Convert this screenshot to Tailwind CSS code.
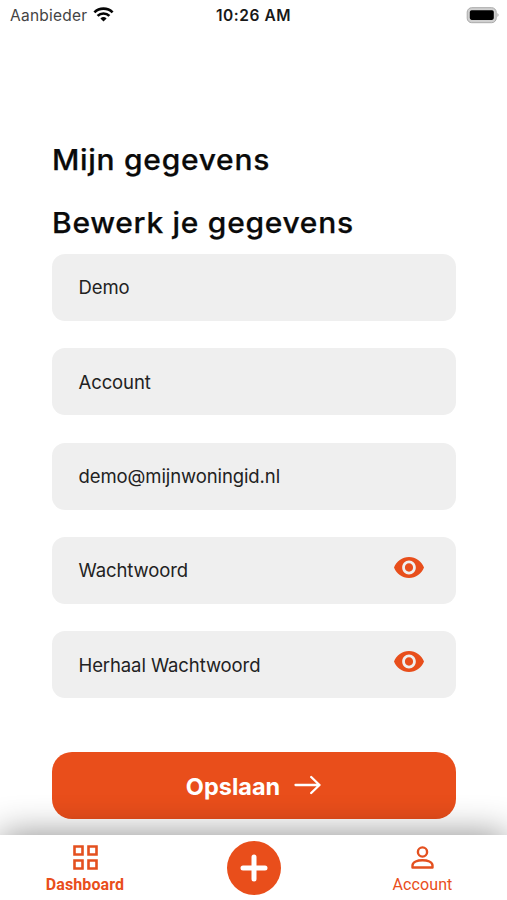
<!DOCTYPE html>
<html lang="nl">
<head>
<meta charset="utf-8">
<title>Mijn gegevens</title>
<script src="https://cdn.jsdelivr.net/npm/@tailwindcss/browser@4"></script>
</head>
<body class="bg-white overflow-hidden">
<div class="w-[507px] h-[900px] flex flex-col overflow-hidden bg-white font-['Inter',sans-serif] text-[#222]">
  <header class="h-[31px] shrink-0 grid grid-cols-3 items-center pl-[10px] pr-[8px]">
    <div class="flex items-center gap-[6px]">
      <span class="text-[15.5px] leading-[20px] tracking-[0.25px] text-[#444]">Aanbieder</span>
      <svg class="w-[21px] h-[15px] mb-[2px]" viewBox="0 0 21 15" fill="none" stroke="#050505" stroke-width="2.7"><path d="M1.4 5.4a13 13 0 0 1 18.2 0"/><path d="M4.6 8.9a8.4 8.4 0 0 1 11.8 0"/><path d="M7.4 11.5a4.5 4.5 0 0 1 6.2 0L10.5 14.5z" fill="#050505" stroke="none"/></svg>
    </div>
    <div class="-ml-[2px] text-center text-[15.5px] leading-[20px] font-semibold text-[#181818] tracking-[0.55px] whitespace-nowrap">10:26 AM</div>
    <svg class="w-[33px] h-[18px] mb-[2px] justify-self-end" viewBox="0 0 33 18"><rect x="1.2" y="1.7" width="29" height="15" rx="4.5" fill="#d0d0d0" stroke="#aaa"/><rect x="3.8" y="4.3" width="24" height="9.6" rx="1.8"/><path d="M31.5 7q2 2 0 4z" fill="#999"/></svg>
  </header>
  <main class="flex-1 min-h-0 px-[51.5px] pt-[109px]">
    <h1 class="h-[40px] leading-[40px] text-[29px] font-medium tracking-[0.7px] origin-left scale-x-[1.033] [-webkit-text-stroke:0.25px_#0a0a0a] text-[#0a0a0a] whitespace-nowrap">Mijn gegevens</h1>
    <h2 class="mt-[23px] h-[40px] leading-[40px] text-[29px] font-medium tracking-[0.7px] origin-left scale-x-[1.033] [-webkit-text-stroke:0.25px_#0a0a0a] text-[#0a0a0a] whitespace-nowrap">Bewerk je gegevens</h2>
    <form class="mt-[11px] flex flex-col gap-[27.3px]">
      <div class="h-[67px] rounded-[13px] bg-[#efefef] flex items-center px-[27px] text-[18.5px] tracking-[-0.1px]"><span class="pt-[1px]">Demo</span></div>
      <div class="h-[67px] rounded-[13px] bg-[#efefef] flex items-center px-[27px] text-[18.5px] tracking-[-0.1px]"><span class="pt-[2px]">Account</span></div>
      <div class="h-[67px] rounded-[13px] bg-[#efefef] flex items-center px-[27px] text-[18.5px] tracking-[-0.1px]"><span class="pt-[2px]">demo@mijnwoningid.nl</span></div>
      <div class="h-[67px] rounded-[13px] bg-[#efefef] flex items-center justify-between pl-[27px] pr-[32px] text-[18.5px] tracking-[-0.1px]"><span class="pt-[1px]">Wachtwoord</span>
        <svg class="w-[30px] h-[21px] mb-[6px]" viewBox="1 4.5 22 15" preserveAspectRatio="none" fill="#e84e1b"><path d="M12 4.500C7 4.500 2.730 7.610 1 12c1.730 4.390 6 7.500 11 7.500s9.270-3.110 11-7.500c-1.730-4.390-6-7.500-11-7.500zM12 17c-2.760 0-5-2.240-5-5s2.240-5 5-5 5 2.240 5 5-2.240 5-5 5zm0-8c-1.660 0-3 1.340-3 3s1.340 3 3 3 3-1.340 3-3-1.340-3-3-3z"/></svg></div>
      <div class="h-[67px] rounded-[13px] bg-[#efefef] flex items-center justify-between pl-[27px] pr-[32px] text-[18.5px] tracking-[-0.1px]"><span class="pt-[2px]">Herhaal Wachtwoord</span>
        <svg class="w-[30px] h-[21px] mb-[6px]" viewBox="1 4.5 22 15" preserveAspectRatio="none" fill="#e84e1b"><path d="M12 4.500C7 4.500 2.730 7.610 1 12c1.730 4.390 6 7.500 11 7.500s9.270-3.110 11-7.500c-1.730-4.390-6-7.500-11-7.500zM12 17c-2.760 0-5-2.240-5-5s2.240-5 5-5 5 2.240 5 5-2.240 5-5 5zm0-8c-1.660 0-3 1.340-3 3s1.340 3 3 3 3-1.340 3-3-1.340-3-3-3z"/></svg></div>
    </form>
    <button class="mt-[54.3px] w-full h-[67px] rounded-[20px] bg-[#e94e1b] text-white text-[23.5px] font-bold flex items-center justify-center gap-[14px]"><span class="pt-[1px]">Opslaan</span>
      <svg class="w-[27px] h-[20px] mb-[2px]" viewBox="0 0 27 20" fill="none" stroke="#fff" stroke-width="2.3" stroke-linecap="round" stroke-linejoin="round"><path d="M1.5 10h24M17.200 2l8.300 8-8.300 8"/></svg></button>
  </main>
  <nav class="relative z-10 h-[65.500px] shrink-0 bg-white shadow-[0_0_36px_rgba(0,0,0,0.46)] grid grid-cols-3 text-[#e94e1b] font-['Roboto',sans-serif] text-[16px] leading-[20px]">
    <div class="flex flex-col items-center pt-[10px] gap-[5.5px] font-bold">
      <svg class="w-[25px] h-[25px] ml-[2px]" viewBox="0 0 25 25" fill="none" stroke="#e4501f" stroke-width="2.600"><path d="M1.500 1.500h8v8h-8zM15.500 1.500h8v8h-8zM1.500 15.500h8v8h-8zM15.500 15.500h8v8h-8z"/></svg>
      <span class="tracking-[0.1px] ml-[1px]">Dashboard</span>
    </div>
    <div class="flex justify-center pt-[6px]">
      <div class="w-[54px] h-[54px] rounded-full bg-[#e94e1b] flex items-center justify-center">
        <svg class="w-[28px] h-[28px]" viewBox="0 0 28 28" fill="none" stroke="#fff" stroke-width="5" stroke-linecap="round"><path d="M14 3v22M3 14h22"/></svg>
      </div>
    </div>
    <div class="flex flex-col items-center pt-[11px] gap-[5.5px]">
      <svg class="w-[23px] h-[24px]" viewBox="0 0 23 24" fill="none" stroke="#e4501f" stroke-width="2.400"><circle cx="11.500" cy="6" r="4.600"/><path d="M1.500 21.500v-2c0-3.500 5-5.300 10-5.300s10 1.800 10 5.300v2z" stroke-linejoin="round"/></svg>
      <span class="tracking-[0.1px]">Account</span>
    </div>
  </nav>
</div>
</body>
</html>
